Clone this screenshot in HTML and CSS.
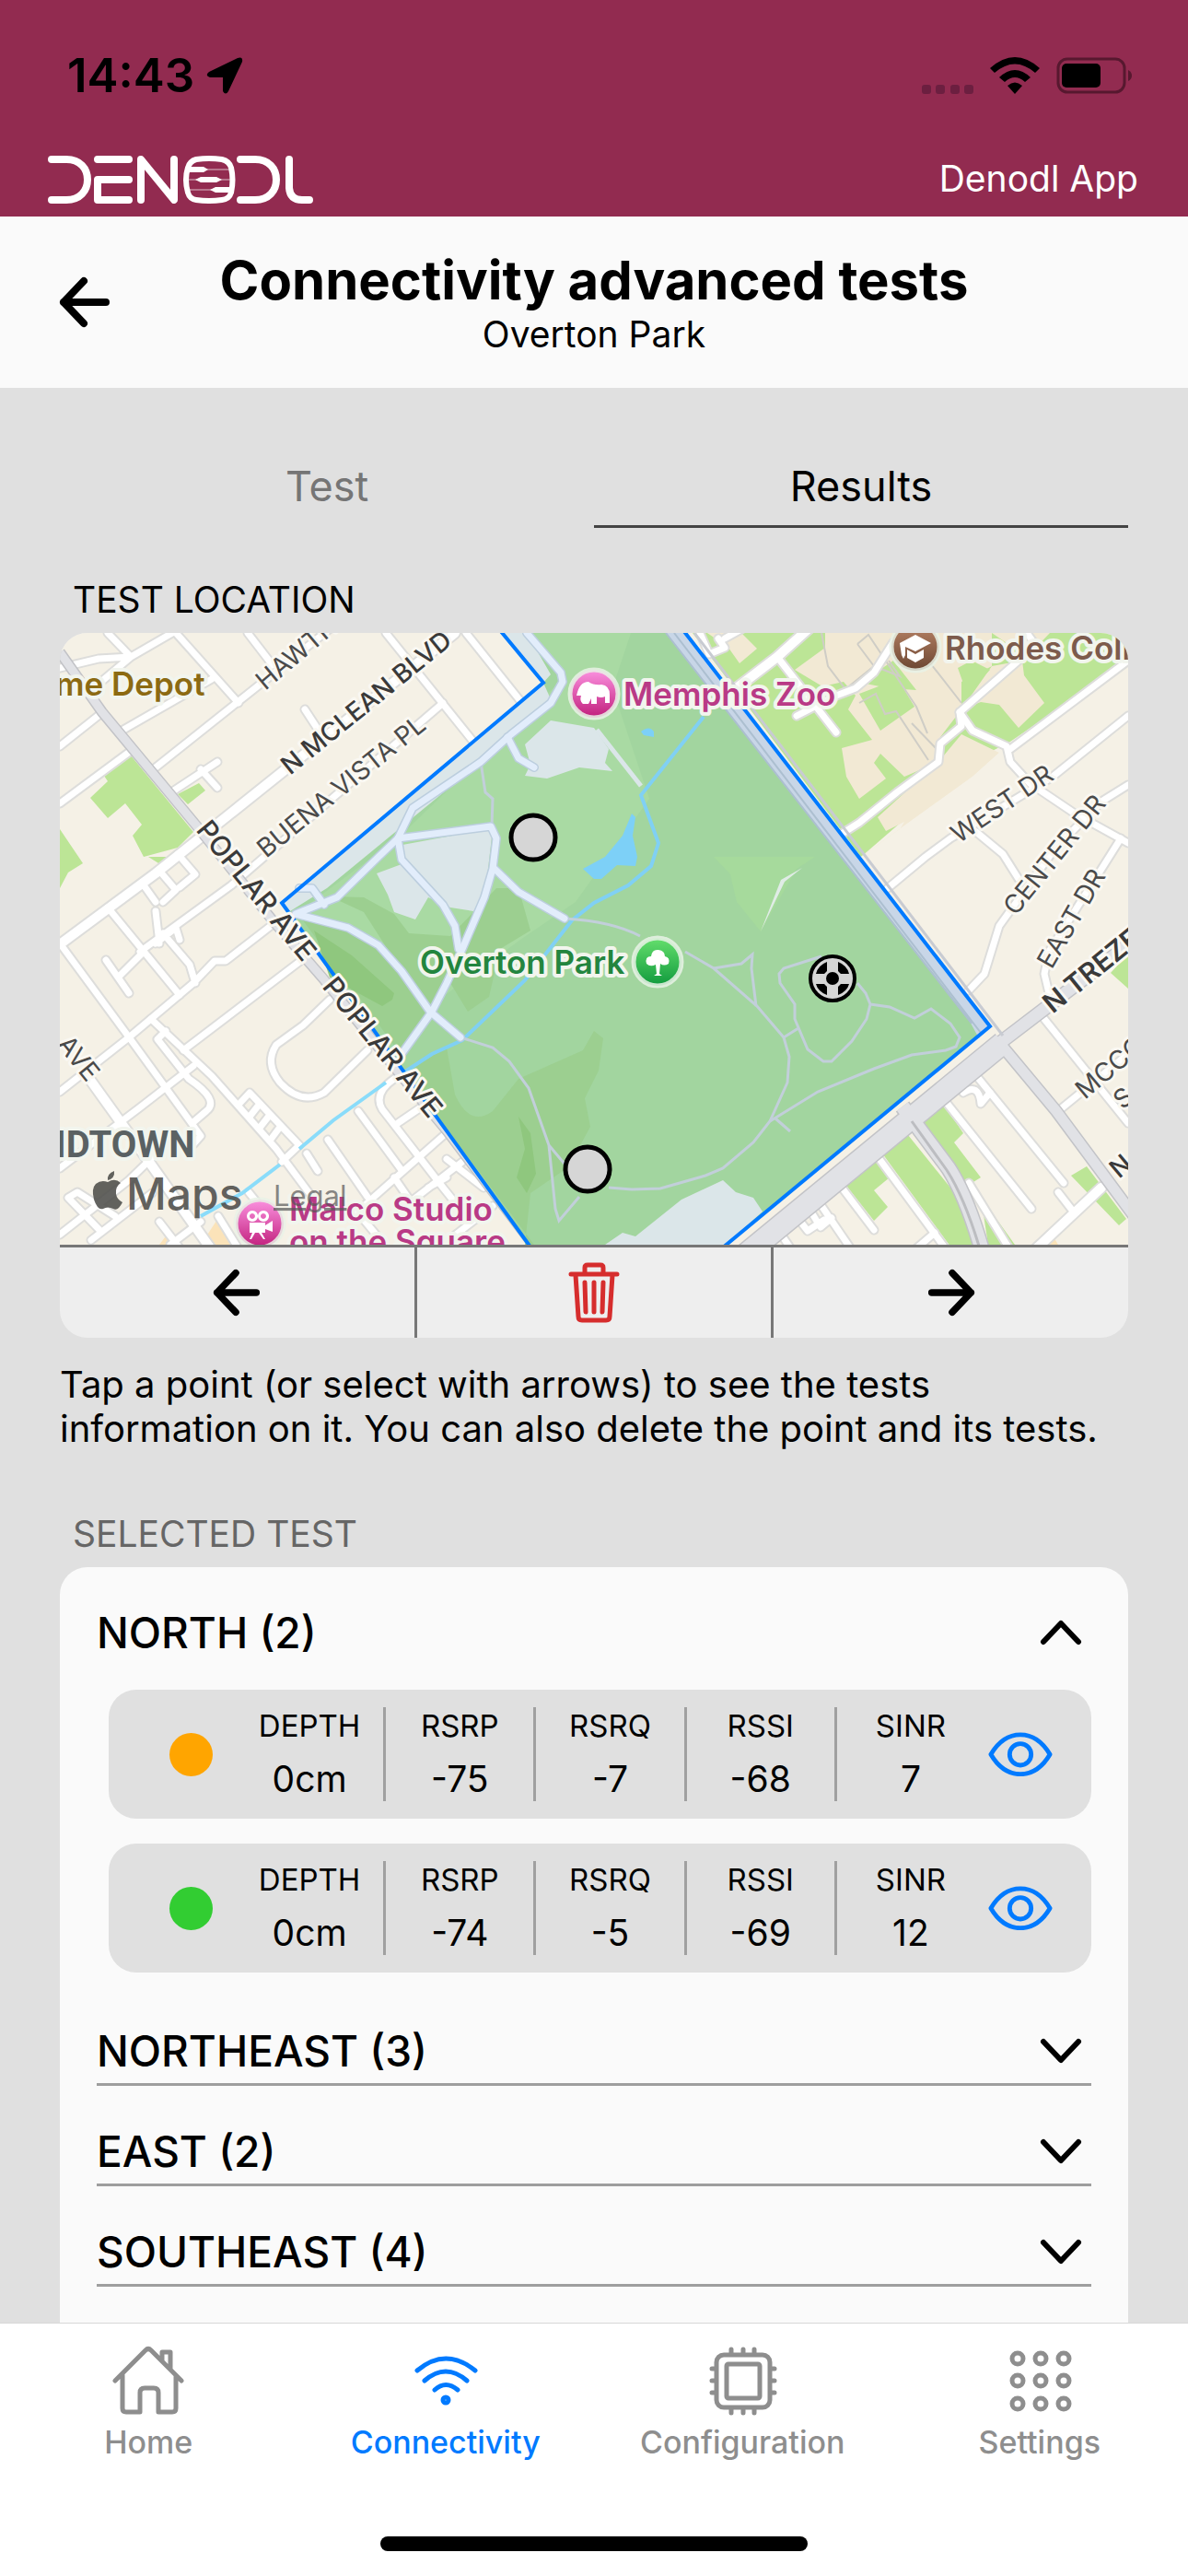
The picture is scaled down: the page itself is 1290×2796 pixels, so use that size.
FILE: index.html
```html
<!DOCTYPE html>
<html lang="en">
<head>
    <meta charset="UTF-8">
    <meta name="viewport" content="width=device-width, initial-scale=1.0">
    <title>Denodl App</title>
    <link rel="stylesheet" href="styles.css">
</head>
<body>
    <div class="app">
        <!-- Status bar and brand -->
        <header class="top">
            <div class="status-bar">
                <div class="status-left">
                    <span class="time">14:43</span>
                    <svg class="location-icon" viewBox="0 0 42 42" aria-hidden="true">
                        <path d="M4 17 L35 2 Q41 0 40 6 L25 38 Q22 43 19 38 V23 H5 Q-1 21 4 17Z"/>
                    </svg>
                </div>
                <div class="status-right">
                    <svg class="signal-icon" viewBox="0 0 56 10" aria-hidden="true">
                        <g fill="#6c1f40">
                            <rect x="0" width="10" height="10" rx="3"/>
                            <rect x="15" width="10" height="10" rx="3"/>
                            <rect x="31" width="10" height="10" rx="3"/>
                            <rect x="46" width="10" height="10" rx="3"/>
                        </g>
                    </svg>
                    <svg class="wifi-status" viewBox="0 0 54 40" aria-hidden="true">
                        <path d="M0 12 Q27 -12 54 12 L49 17 Q27 -2 5 17Z"/>
                        <path d="M10 22 Q27 6 44 22 L38 27 Q27 17 16 27Z"/>
                        <path d="M19 31 Q27 24 35 31 L27 40Z"/>
                    </svg>
                    <svg class="battery-icon" viewBox="0 0 84 40" aria-hidden="true">
                        <rect x="2" y="2" width="72" height="36" rx="10" fill="none" stroke="#57182f" stroke-width="3"/>
                        <rect x="6" y="7" width="42" height="26" rx="5"/>
                        <path d="M78 14 Q82 16 82 20 T78 26Z" fill="#57182f"/>
                    </svg>
                </div>
            </div>
            <div class="brand-row">
                <svg class="logo" viewBox="0 0 290 54" role="img" aria-label="Denodl">
                    <g fill="none" stroke="#fff" stroke-width="8" stroke-linecap="round" stroke-linejoin="round">
                        <path d="M4 6H20C35 6 43 16 43 28S35 50 20 50H4"/>
                        <path d="M54 6H88M88 28H54V50H88"/>
                        <path d="M101 50V6L137 50V6"/>
                        <path d="M152 15Q154 8 161 6Q175 4 189 6Q197 8 199 15Q202 28 199 42Q197 49 189 50Q175 52 161 50Q154 49 152 42Q148 28 152 15Z" stroke-width="6"/>
                        <path d="M209 6H225C240 6 248 16 248 28S240 50 225 50H209"/>
                        <path d="M262 6V37Q263 50 276 50H284"/>
                    </g>
                    <path d="M153 17H198M153 28H198M153 39H198" stroke="#fff" stroke-opacity=".7" stroke-width="1"/>
                    <path d="M152 14H169L174 17L169 20H152ZM160 28L166 25H183L189 28L183 31H166ZM176 39L182 36H199V42H182Z" fill="#fff"/>
                </svg>
                <span class="brand-name">Denodl App</span>
            </div>
        </header>

        <!-- Page title -->
        <div class="title-bar">
            <button class="icon-button back" aria-label="Back">
                <svg viewBox="0 0 56 56" aria-hidden="true"><path d="M51 28H5M27 5L5 28L27 51"/></svg>
            </button>
            <div class="title-text">
                <h1>Connectivity advanced tests</h1>
                <p>Overton Park</p>
            </div>
        </div>

        <main class="content">
            <div class="tabs" role="tablist">
                <button class="tab" role="tab" aria-selected="false">Test</button>
                <button class="tab active" role="tab" aria-selected="true">Results</button>
            </div>

            <h2 class="section-title">TEST LOCATION</h2>
            <div class="map-card">
                <svg class="map" viewBox="0 0 1160 664" role="img" aria-label="Map of Overton Park">
                    <defs>
                        <linearGradient id="pinkPin" x2="0" y2="1"><stop offset="0" stop-color="#fb92e0"/><stop offset="1" stop-color="#c11f7c"/></linearGradient>
                        <linearGradient id="brownPin" x2="0" y2="1"><stop offset="0" stop-color="#b98467"/><stop offset="1" stop-color="#6b4632"/></linearGradient>
                        <linearGradient id="greenPin" x2="0" y2="1"><stop offset="0" stop-color="#65df6d"/><stop offset="1" stop-color="#109a3d"/></linearGradient>
                        <!-- every white street, drawn once as casing and once as fill -->
                        <g id="streets">
                            <path d="M0 38L42 28L77 26L122 0M52 0L77 26L46 52M0 123L44 88M126 0L194 76M104 146L305 -14M204 0L231 35M69 105L165 50M0 185L77 128"/>
                            <path d="M354 0L453 123M441 0L505 80M266 83L285 112M124 171L171 140M153 148L171 168M87 346L186 274L416 76"/>
                            <path d="M3 341L73 436L153 546L145 555M52 298L130 393M50 355L75 391M65 372L91 346M89 271L104 292M108 258L126 279L112 292M128 240L147 262L130 276"/>
                            <path d="M104 302L108 337M104 337L126 320L130 333M112 326L141 360L147 380M134 453L260 357M0 498L75 439L145 380L168 356L180 356L229 318"/>
                            <path d="M293 398L264 426L235 447Q222 467 239 488Q262 513 287 499L334 453"/>
                            <path d="M99 419L165 481L235 560L276 615M115 432L106 441L140 484Q174 507 159 519L145 531M145 470L87 515L0 581"/>
                            <path d="M194 512L206 499L260 556L241 574M206 525L217 511M217 537L228 523M228 551L240 535M268 565L280 584"/>
                            <path d="M324 519L371 583M291 550L334 612M363 484Q340 500 350 517L416 602L441 633M416 546L330 622M437 574L371 625M392 515L367 532M363 591L392 633M400 602L420 591"/>
                            <path d="M0 653L75 594L110 560M9 613L44 649M9 613L19 607L60 633M34 659L100 608M108 639L132 670M120 664L153 639M205 607L230 638M172 633L195 670M460 602L420 571M470 622L395 680M320 625L345 655"/>
                            <path d="M695 0L705 23L722 16L715 6M722 6L740 -4M843 108L779 26M905 10L884 43L864 60L843 68L800 90"/>
                            <path d="M1050 0L1060 14L1041 30L977 86L979 101L956 120L954 140L909 173L868 206L849 218"/>
                            <path d="M977 86L991 106L1028 123L1032 140L1053 163L1102 196L1160 228M1160 30L1032 126M1160 90L1078 156L967 223L940 243L899 277"/>
                            <path d="M1160 165L1131 183L1080 235L1020 318L1004 370L987 388M995 216L1024 240L1041 267M1152 223L1135 250L1074 346L1069 370L1074 391"/>
                            <path d="M1069 419L1160 532M993 478L1090 597M958 504L1055 625M884 563L963 670M987 597L1032 670M843 594L884 648M821 613L860 670M777 644L795 670"/>
                            <path d="M798 631L812 649L830 637M810 619L826 645L838 635M1084 519L1160 457M1084 607L1098 625M981 499Q998 488 1000 511L1010 499M930 668L950 651"/>
                        </g>
                        <g id="mainStreets">
                            <path d="M0 338L104 261L239 153L429 0M30 481L99 577L165 670M819 -10L779 26L732 62M1131 602L1052 676"/>
                        </g>
                        <g id="parkRoads">
                            <path d="M507 0L544 43L546 53L533 76L490 110L457 140L383 190L367 223L371 246L416 295L429 318L433 343"/>
                            <path d="M367 223L468 210L474 223L470 256L461 287L437 343L420 380L404 411L371 457M367 223L346 243L301 287L256 305L313 320L346 339L371 367L402 411L435 439"/>
                            <path d="M472 256L498 281L548 310M486 113L498 136L515 146M260 277H274L287 295"/>
                        </g>
                    </defs>

                    <rect width="1160" height="664" fill="#f5f1e6"/>

                    <!-- green plots around the park -->
                    <g fill="#bce596">
                        <path d="M77 133L145 216L128 233L91 243L79 220L89 208L71 185L52 201L33 179L52 161L48 155ZM0 213L25 250L9 260L0 277ZM128 175L151 163L158 171L139 186Z"/>
                        <path d="M96 243L112 253L125 243Z"/>
                        <path d="M687 0H1160V30L1032 118L989 140L870 243Z"/>
                        <path d="M934 524L956 506L981 543L971 553L1000 591L987 599L971 581ZM888 558L917 540L942 571L975 612L994 670H970ZM847 591L884 566L901 591L884 605L899 623L884 638ZM1098 589L1115 579L1158 636L1150 643ZM1000 612L1037 664H1008ZM1141 369L1160 348V386Z"/>
                    </g>
                    <g fill="#f2e9d4">
                        <path d="M703 0H740L757 17L738 33L726 16ZM831 0H1012V36L979 53V83L956 113L954 140L917 156L891 131L884 141L897 158L868 180L854 156L849 125L882 116L856 83L864 68L851 53L828 58L798 40L831 16Z"/>
                        <path d="M1020 130L979 110L954 140L888 200L897 215L917 205L905 225L870 243L991 156ZM1012 36L1045 30L1047 46L1069 76L1041 103L1020 78L1000 75L979 83ZM1012 0H1075L1050 26Z"/>
                        <path d="M1020 130L1160 30V140L880 260L870 243L991 156Z" fill="#f5f1e6"/>
                    </g>
                    <g fill="#bce596">
                        <path d="M868 66L910 50L928 80L891 106ZM905 30L930 62L900 60L870 54ZM975 38L990 30L1010 40L985 66Z"/>
                    </g>
                    <path d="M153 664L172 635L195 664ZM108 664L120 648L130 664ZM1060 664L1078 654L1084 664Z" fill="#fbe3b9"/>

                    <!-- footpaths of the campus -->
                    <path d="M827 0L834 36L853 61L884 36M866 12L878 2L930 80L942 109M866 12L884 36L912 47L900 30M868 76L886 66L896 88L908 85L943 138M943 30L979 76M925 98L952 126" fill="none" stroke="#cfcdc6" stroke-width="2"/>

                    <g fill="none" stroke-linecap="round" stroke-linejoin="round">
                        <use href="#streets" stroke="#dddddb" stroke-width="11"/>
                        <use href="#mainStreets" stroke="#dddddb" stroke-width="14"/>
                        <use href="#streets" stroke="#fff" stroke-width="7"/>
                        <use href="#mainStreets" stroke="#fff" stroke-width="10"/>
                    </g>

                    <!-- grey avenues -->
                    <g fill="none" stroke="#c2c3c7">
                        <path d="M0 21L46 86L149 210L231 312L285 374L371 481L420 540L520 672" stroke-width="12"/>
                        <path d="M1170 331L1022 444" stroke-width="16"/>
                        <path d="M1022 447L1082 519L1168 635" stroke-width="14"/>
                        <path d="M1024 445L738 680" stroke-width="26"/>
                        <path d="M915 514L965 581Q985 612 1002 672" stroke-width="18"/>
                    </g>
                    <g fill="none" stroke="#e1e2e6">
                        <path d="M0 21L46 86L149 210L231 312L285 374L371 481L420 540L520 672" stroke-width="9"/>
                        <path d="M1170 331L1022 444" stroke-width="13"/>
                        <path d="M1022 447L1082 519L1168 635" stroke-width="11"/>
                        <path d="M1024 445L738 680" stroke-width="23"/>
                        <path d="M915 514L965 581Q985 612 1002 672" stroke-width="15"/>
                    </g>
                    <path d="M925 530L963 583Q983 614 1000 672" fill="none" stroke="#bcbdc1" stroke-width="3"/>
                    <path d="M689 0L1024 437" stroke="#c8cbd2" stroke-width="3"/>

                    <!-- Overton Park -->
                    <path d="M480 0L525 54L241 293L515 672H716L1010 427L679 0Z" fill="#a2d59f"/>
                    <path d="M507 0L546 50L367 223L256 305L402 405L500 333L560 292L640 180L600 60L620 0Z" fill="#a9daa3"/>
                    <path d="M760 243L820 243L800 256L761 324L735 292L728 262L710 243Z" fill="#a6da9c"/>
                    <path d="M293 286L330 287L363 305L379 326L424 329L474 277L498 277L511 323L478 343L466 395L443 411L424 380L404 411L371 459L264 312L313 320L346 339L402 411L371 367L330 303Z" fill="#9ccf90"/>
                    <path d="M374 477L420 450L429 501Q445 537 470 519L498 484L568 453L580 432L590 440L585 475L570 505L576 536L552 580L511 608L505 664H515Z" fill="#9ccf90"/>
                    <path d="M276 323L317 350L363 391L361 398L350 405L293 374ZM498 525L511 543L517 587L507 608L496 591L505 560Z" fill="#8fc77e"/>
                    <path d="M480 0H507L533 45L525 54L533 72L457 140L290 277L250 302L241 293L525 54Z" fill="#dbe6e9"/>
                    <path d="M505 121L533 95L568 101L580 103L596 126L592 141L600 150L564 146L529 158L505 155L511 143ZM372 230L470 212L461 291L449 302L424 298L400 287L386 311L363 303L356 284L344 261L371 251ZM592 664L611 651L625 655L675 615L720 594L734 607L753 613L763 628L723 664Z" fill="#dbe6e9"/>
                    <path d="M583 105L631 166" stroke="#dbe6e9" stroke-width="5"/>
                    <path d="M761 324L783 268L806 255L787 270Z" fill="#e0ece6"/>
                    <path d="M658 0H679L1010 427L998 440L985 416Z" fill="#c8d6e7"/>
                    <path d="M658 0L990 424M667 0L1000 434" stroke="#acbfd0" stroke-width="2"/>

                    <!-- stream and ponds -->
                    <path d="M699 91L631 176L650 228L642 253L617 274L580 293L556 312L527 349L505 377L437 442L404 457L375 476" fill="none" stroke="#80d0f4" stroke-width="4"/>
                    <path d="M354 488L297 529L260 560M239 577L198 608L153 633" fill="none" stroke="#8adcfa" stroke-width="4"/>
                    <path d="M621 196L625 200L622 220L627 243L625 253L605 252L588 267H580L568 256L592 243L611 220ZM631 107Q640 100 645 107V113L634 111Z" fill="#7dd0f7"/>

                    <!-- park paths -->
                    <g fill="none" stroke="#c2cfda" stroke-width="3">
                        <path d="M435 439L470 450L488 465L509 494L531 556L552 581M531 556L538 625L542 638L564 612M548 310Q600 313 630 329M679 346L710 364L757 405L786 439L792 460L790 488L771 530L753 553L720 581L701 589L652 603L621 604L596 602"/>
                        <path d="M710 364L740 359L752 349L751 364L756 405M827 351L786 364L781 370L782 380L798 403V419L812 452L829 465H838L860 443L876 419L880 403L875 391L866 380M880 403L901 406L928 418L946 408L967 424L977 439L973 449L962 453L925 458L884 473L823 498L771 530M786 439L802 429M777 527L793 541M457 140L462 173L470 180L469 210"/>
                    </g>
                    <g fill="none" stroke-linecap="round" stroke-linejoin="round">
                        <use href="#parkRoads" stroke="#bccede" stroke-width="10"/>
                        <use href="#parkRoads" stroke="#e2edfb" stroke-width="7"/>
                    </g>

                    <path d="M477 -4L525 54L241 293L515 672L714 672L1010 427L676 -4" fill="none" stroke="#007aff" stroke-width="4"/>

                    <!-- street names -->
                    <g class="street">
                        <text transform="translate(223 63) rotate(-40)">HAWTHORNE</text>
                        <text class="major" transform="translate(250 155) rotate(-39)">N MCLEAN BLVD</text>
                        <text transform="translate(224 245) rotate(-39)">BUENA VISTA PL</text>
                        <text class="avenue" transform="translate(147 214) rotate(51)">POPLAR AVE</text>
                        <text class="avenue" transform="translate(284 384) rotate(51)">POPLAR AVE</text>
                        <text transform="translate(-4 447) rotate(51)">AVE</text>
                        <text transform="translate(976 229) rotate(-34)">WEST DR</text>
                        <text transform="translate(1038 308) rotate(-51)">CENTER DR</text>
                        <text transform="translate(1077 366) rotate(-60)">EAST DR</text>
                        <text class="highway" transform="translate(1078 414) rotate(-39)">N TREZEVANT</text>
                        <text transform="translate(1113 507) rotate(-40)">MCCORD</text>
                        <text class="major" transform="translate(1150 593) rotate(-40)">N</text>
                        <text transform="translate(1154 518) rotate(-40)">S</text>
                    </g>

                    <!-- places -->
                    <g class="place">
                        <text x="-5" y="68" fill="#8c6a12">me Depot</text>
                        <text x="612" y="79" fill="#b93a86">Memphis Zoo</text>
                        <text x="961" y="29" fill="#7d5b4c">Rhodes Coll</text>
                        <text x="391" y="370" fill="#23853f">Overton Park</text>
                        <text x="249" y="638" fill="#b93a86">Malco Studio</text>
                        <text x="249" y="673" fill="#b93a86">on the Square</text>
                        <text class="district" x="-5" y="569">IDTOWN</text>
                    </g>
                    <g stroke="#e9f2e6" stroke-opacity=".85" stroke-width="5">
                        <circle cx="580" cy="66" r="26" fill="url(#pinkPin)"/>
                        <circle cx="929" cy="15" r="26" fill="url(#brownPin)"/>
                        <circle cx="649" cy="357" r="26" fill="url(#greenPin)"/>
                        <circle cx="217" cy="641" r="26" fill="url(#pinkPin)"/>
                    </g>
                    <g fill="#fff">
                        <path d="M561 68Q564 53 574 53Q580 57 588 56Q597 57 597 67V76H592V69Q588 71 583 69V77H577V71L574 77H568Q564 74 566 68Z"/>
                        <path d="M912 11L929 2L946 11L929 20L918 15V24L916 28L914 24ZM920 18L929 23L938 18V27L929 32L920 27Z"/>
                        <path d="M637 359Q635 351 642 351Q643 343 650 344Q657 345 657 351Q663 352 661 359Q656 362 652 359L651 370L654 372H645L648 370L647 360Q641 363 637 359Z"/>
                        <path fill-rule="evenodd" d="M209 627a6 6 0 1 0 .1 0ZM209 630a3 3 0 1 1-.1 0ZM221 627a6 6 0 1 0 .1 0ZM221 630a3 3 0 1 1-.1 0ZM206 640H223V643L231 638V650L223 647V651H219L223 658H221L216 651H212L208 658H206L209 651H206Z"/>
                    </g>

                    <!-- map credit -->
                    <g fill="#4d4d4a" fill-opacity=".88">
                        <path d="M52 596Q60 591 66 597Q60 601 61 609Q62 615 68 618Q63 628 58 625Q52 622 47 625Q41 627 37 615Q34 603 39 598Q45 593 52 596ZM52 594Q51 587 59 584Q60 592 52 594Z"/>
                        <text class="credit" x="72" y="626">Maps</text>
                    </g>
                    <text class="legal" x="232" y="622">Legal</text>

                    <!-- measured points -->
                    <g fill="#d6d6d6" stroke="#000" stroke-width="5">
                        <circle cx="514" cy="222" r="24"/>
                        <circle cx="573" cy="582" r="24"/>
                        <circle cx="839" cy="375" r="24" stroke-width="4"/>
                    </g>
                    <g>
                        <circle cx="839" cy="375" r="7"/>
                        <path d="M833 357V367L830 370H821Q823 361 833 357ZM845 357V367L848 370H857Q855 361 845 357ZM833 393V384L830 381H821Q823 389 833 393ZM845 393V384L848 381H857Q855 389 845 393Z"/>
                    </g>
                </svg>
                <div class="map-controls">
                    <button class="icon-button" aria-label="Previous point">
                        <svg viewBox="0 0 56 56" aria-hidden="true"><path d="M51 28H5M27 5L5 28L27 51"/></svg>
                    </button>
                    <button class="icon-button delete" aria-label="Delete point">
                        <svg viewBox="0 0 56 66" aria-hidden="true"><path d="M3 13H53M18 12V6Q18 3 21 3H35Q38 3 38 6V12M8 14L11 59Q11 63 15 63H41Q45 63 45 59L48 14M18 22L19 54M28 22V54M38 22L37 54"/></svg>
                    </button>
                    <button class="icon-button" aria-label="Next point">
                        <svg viewBox="0 0 56 56" aria-hidden="true"><path d="M5 28H51M29 5L51 28L29 51"/></svg>
                    </button>
                </div>
            </div>
            <p class="hint">Tap a point (or select with arrows) to see the tests information on it. You can also delete the point and its tests.</p>

            <h2 class="section-title muted">SELECTED TEST</h2>
            <div class="results-card">
                <button class="direction open" aria-expanded="true">
                    <span>NORTH (2)</span>
                    <svg viewBox="0 0 50 36" aria-hidden="true"><path d="M6 28L25 8L44 28"/></svg>
                </button>

                <div class="test-list">
                    <div class="test-row">
                        <span class="dot orange"></span>
                        <dl class="metrics">
                            <div><dt>DEPTH</dt><dd>0cm</dd></div>
                            <div><dt>RSRP</dt><dd>-75</dd></div>
                            <div><dt>RSRQ</dt><dd>-7</dd></div>
                            <div><dt>RSSI</dt><dd>-68</dd></div>
                            <div><dt>SINR</dt><dd>7</dd></div>
                        </dl>
                        <button class="view" aria-label="View test">
                            <svg viewBox="0 0 72 50" aria-hidden="true"><path d="M3 25Q16 3 36 3T69 25Q56 47 36 47T3 25Z"/><circle cx="36" cy="25" r="12"/></svg>
                        </button>
                    </div>
                    <div class="test-row">
                        <span class="dot green"></span>
                        <dl class="metrics">
                            <div><dt>DEPTH</dt><dd>0cm</dd></div>
                            <div><dt>RSRP</dt><dd>-74</dd></div>
                            <div><dt>RSRQ</dt><dd>-5</dd></div>
                            <div><dt>RSSI</dt><dd>-69</dd></div>
                            <div><dt>SINR</dt><dd>12</dd></div>
                        </dl>
                        <button class="view" aria-label="View test">
                            <svg viewBox="0 0 72 50" aria-hidden="true"><path d="M3 25Q16 3 36 3T69 25Q56 47 36 47T3 25Z"/><circle cx="36" cy="25" r="12"/></svg>
                        </button>
                    </div>
                </div>

                <button class="direction" aria-expanded="false">
                    <span>NORTHEAST (3)</span>
                    <svg viewBox="0 0 50 36" aria-hidden="true"><path d="M6 8L25 28L44 8"/></svg>
                </button>
                <button class="direction" aria-expanded="false">
                    <span>EAST (2)</span>
                    <svg viewBox="0 0 50 36" aria-hidden="true"><path d="M6 8L25 28L44 8"/></svg>
                </button>
                <button class="direction" aria-expanded="false">
                    <span>SOUTHEAST (4)</span>
                    <svg viewBox="0 0 50 36" aria-hidden="true"><path d="M6 8L25 28L44 8"/></svg>
                </button>
            </div>
        </main>

        <!-- Bottom navigation -->
        <footer class="bottom">
            <nav class="bottom-nav">
                <a href="#home">
                    <svg viewBox="0 0 80 80" aria-hidden="true"><path d="M4 38L37 5Q40 2 43 5L76 38M12 32V68Q12 72 16 72H31V51Q31 46 36 46H46Q51 46 51 51V72H66Q70 72 70 68V32M55 16V7H64V25"/></svg>
                    <span>Home</span>
                </a>
                <a href="#connectivity" class="active">
                    <svg viewBox="0 0 80 80" aria-hidden="true"><path d="M9 27Q40 1 72 27M17 38Q40 18 63 38M28 48Q40 37 53 48"/><circle cx="40" cy="59" r="3"/></svg>
                    <span>Connectivity</span>
                </a>
                <a href="#configuration">
                    <svg viewBox="0 0 80 80" aria-hidden="true"><rect x="12" y="10" width="58" height="57" rx="8"/><rect x="23" y="20" width="36" height="37" rx="2"/><path d="M28 4V9M41 4V9M53 4V9M28 68V73M41 68V73M53 68V73M7 25H11M7 38H11M7 51H11M71 25H75M71 38H75M71 51H75"/></svg>
                    <span>Configuration</span>
                </a>
                <a href="#settings">
                    <svg viewBox="0 0 80 80" aria-hidden="true">
                        <circle cx="16" cy="14" r="6"/><circle cx="41" cy="14" r="6"/><circle cx="66" cy="14" r="6"/>
                        <circle cx="16" cy="38" r="6"/><circle cx="41" cy="38" r="6"/><circle cx="66" cy="38" r="6"/>
                        <circle cx="16" cy="63" r="6"/><circle cx="41" cy="63" r="6"/><circle cx="66" cy="63" r="6"/>
                    </svg>
                    <span>Settings</span>
                </a>
            </nav>
            <div class="home-indicator"></div>
        </footer>
    </div>
</body>
</html>
```
FILE: styles.css
```css
/* Basic reset */
* {
    box-sizing: border-box;
    margin: 0;
    padding: 0;
}

body {
    font-family: Inter, "Liberation Sans", sans-serif;
    font-size: 39px;
    line-height: 48px;
    color: #000;
    background-color: #e0e0e0;
}

button {
    font: inherit;
    color: inherit;
    background: none;
    border: none;
    cursor: pointer;
}

svg {
    display: block;
}

.app {
    height: 100vh;
    display: flex;
    flex-direction: column;
}

/* Status bar and brand */
.top {
    background-color: #922b50;
    padding: 51px 54px 14px 52px;
}

.status-bar {
    display: flex;
    justify-content: space-between;
    align-items: center;
    padding: 0 5px 0 21px;
    margin-bottom: 54px;
}

.status-left, .status-right {
    display: flex;
    align-items: center;
    gap: 18px;
}

.status-left {
    gap: 12px;
}

.time {
    font-size: 51px;
    line-height: 62px;
    font-weight: 600;
}

.location-icon {
    width: 42px;
}

.signal-icon {
    width: 56px;
    align-self: flex-end;
}

.wifi-status {
    width: 54px;
}

.battery-icon {
    width: 84px;
}

.brand-row {
    display: flex;
    justify-content: space-between;
    align-items: center;
}

.logo {
    width: 290px;
}

.brand-name {
    color: white;
}

/* Page title */
.title-bar {
    background-color: #fafafa;
    display: grid;
    grid-template-columns: 56px 1fr 56px;
    align-items: center;
    padding: 34px 64px;
}

.title-text {
    text-align: center;
}

.title-text h1 {
    font-size: 58px;
    line-height: 70px;
    font-weight: 700;
}

.icon-button svg {
    width: 56px;
    fill: none;
    stroke: currentColor;
    stroke-width: 8;
    stroke-linecap: round;
    stroke-linejoin: round;
}

.content {
    flex: 1;
    min-height: 0;
    overflow: hidden;
    padding: 60px 65px 0;
}

.tabs {
    display: flex;
}

.tab {
    flex: 1;
    font-size: 45px;
    line-height: 54px;
    color: #757575;
    padding: 20px 0 15px;
    border-bottom: 3px solid transparent;
}

.tab.active {
    color: #000;
    border-bottom-color: #444;
}

.section-title {
    font-size: 39px;
    font-weight: 400;
    padding-left: 14px;
    margin: 54px 0 12px;
}

.section-title.muted {
    color: #666;
    margin-top: 66px;
}

/* Map with the point selector below */
.map-card {
    background-color: #eee;
    border-radius: 30px;
    overflow: hidden;
}

.map {
    width: 100%;
}

.map text {
    paint-order: stroke;
    stroke: #faf8f2;
    stroke-width: 6px;
    stroke-linejoin: round;
}

.street text {
    font-size: 28px;
    fill: #4a4a4a;
}

.street .major {
    font-weight: 500;
    fill: #3a3a3a;
}

.street .avenue {
    font-size: 30px;
    font-weight: 500;
    fill: #3a3a3a;
}

.street .highway {
    font-size: 30px;
    font-weight: 600;
    fill: #3a3a3a;
}

.place text {
    font-size: 35px;
    font-weight: 600;
    stroke: #f2f5ee;
    stroke-width: 8px;
}

.place .district {
    font-family: "Liberation Sans Narrow", Roboto, sans-serif;
    font-size: 40px;
    font-weight: 700;
    fill: #5a6163;
}

.map .credit {
    font-size: 48px;
    font-weight: 500;
    stroke: none;
}

.map .legal {
    font-size: 31px;
    fill: #555;
    fill-opacity: 0.7;
    stroke: none;
    text-decoration: underline;
}

.map-controls {
    display: flex;
    height: 101px;
    border-top: 3px solid #777;
}

.map-controls .icon-button {
    flex: 1;
    display: flex;
    align-items: center;
    justify-content: center;
}

.map-controls .icon-button:not(:last-child) {
    border-right: 3px solid #777;
}

.map-controls .icon-button svg {
    width: 52px;
}

.map-controls .delete svg {
    width: 56px;
    stroke: #d62d2d;
    stroke-width: 5;
}

.hint {
    font-size: 40px;
    margin-top: 27px;
}

/* Test results by direction */
.results-card {
    background-color: #fafafa;
    border-radius: 30px;
    padding: 0 40px 120px;
}

.direction {
    width: 100%;
    display: flex;
    justify-content: space-between;
    align-items: center;
    font-size: 46px;
    line-height: 54px;
    font-weight: 500;
    padding: 44px 8px 8px 0;
    border-bottom: 3px solid #9e9e9e;
}

.direction.open {
    border-bottom-color: transparent;
}

.direction svg {
    width: 50px;
    fill: none;
    stroke: #000;
    stroke-width: 6;
    stroke-linecap: round;
    stroke-linejoin: round;
}

.test-list {
    display: flex;
    flex-direction: column;
    gap: 27px;
    margin: 24px 0 14px 13px;
}

.test-row {
    background-color: #e0e0e0;
    border-radius: 30px;
    display: flex;
    align-items: center;
    padding: 19px 42px 19px 66px;
}

.dot {
    width: 47px;
    height: 47px;
    border-radius: 50%;
    margin-right: 25px;
}

.dot.orange {
    background-color: #ffa500;
}

.dot.green {
    background-color: #32cd32;
}

.metrics {
    flex: 1;
    display: flex;
    text-align: center;
}

.metrics div {
    flex: 1;
}

.metrics div + div {
    border-left: 3px solid #a0a0a0;
}

.metrics dt {
    font-size: 33px;
    line-height: 40px;
    margin-bottom: 14px;
}

.view {
    margin-left: 4px;
}

.view svg {
    width: 70px;
    fill: none;
    stroke: #007aff;
    stroke-width: 5;
    stroke-linejoin: round;
}

/* Bottom navigation */
.bottom {
    background-color: white;
    border-top: 1px solid #d8d8d8;
    padding: 24px 0 27px;
}

.bottom-nav {
    display: flex;
}

.bottom-nav a {
    flex: 1;
    display: flex;
    flex-direction: column;
    align-items: center;
    gap: 5px;
    font-size: 34px;
    line-height: 40px;
    font-weight: 500;
    color: #8e8e8e;
    text-decoration: none;
}

.bottom-nav svg {
    width: 80px;
    fill: none;
    stroke: currentColor;
    stroke-width: 5;
    stroke-linecap: round;
    stroke-linejoin: round;
}

.bottom-nav a.active {
    color: #007aff;
}

.home-indicator {
    width: 36%;
    height: 16px;
    border-radius: 8px;
    background-color: #000;
    margin: 82px auto 0;
}
```
